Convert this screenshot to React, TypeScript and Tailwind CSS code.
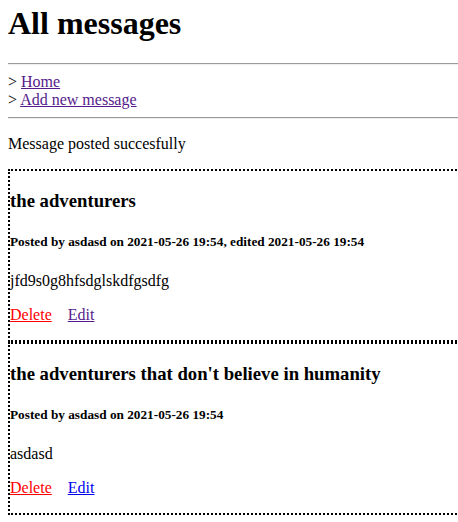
const messages = [
  {
    title: "the adventurers",
    meta: "Posted by asdasd on 2021-05-26 19:54, edited 2021-05-26 19:54",
    body: "jfd9s0g8hfsdglskdfgsdfg",
    editVisited: true,
  },
  {
    title: "the adventurers that don't believe in humanity",
    meta: "Posted by asdasd on 2021-05-26 19:54",
    body: "asdasd",
    editVisited: false,
  },
]

export default function App() {
  return (
    <div className="w-[458px] h-[522px] overflow-hidden bg-white text-black font-['Liberation_Serif','Times_New_Roman',serif] text-[16px] leading-[normal]">
      <div className="w-[540px] pl-2 pt-[4.5px]">
        <h1 className="text-[32px] font-bold mb-[21.44px]">All messages</h1>
        <hr className="h-0 border-t border-b border-t-[#9a9a9a] border-b-[#eeeeee] my-2" />
        <div>
          &gt; <a href="#" className="underline text-[#551a8b]">Home</a>
          <br />
          &gt; <a href="#" className="underline text-[#551a8b]">Add new message</a>
        </div>
        <hr className="h-0 border-t border-b border-t-[#9a9a9a] border-b-[#eeeeee] mt-2" />
        <p className="my-4">Message posted succesfully</p>

        {messages.map((m) => (
          <div key={m.title} className="border-2 border-dotted border-black border-r-0">
            <h3 className="text-[18.72px] font-bold my-[18.72px]">{m.title}</h3>
            <h5 className="text-[13.28px] font-bold my-[22.18px]">{m.meta}</h5>
            <p className="my-4">{m.body}</p>
            <p className="my-4 flex gap-4">
              <a href="#" className="underline text-[#ff0000]">Delete</a>
              <a href="#" className={`underline ${m.editVisited ? "text-[#551a8b]" : "text-[#0000ee]"}`}>Edit</a>
            </p>
          </div>
        ))}
      </div>
    </div>
  )
}
